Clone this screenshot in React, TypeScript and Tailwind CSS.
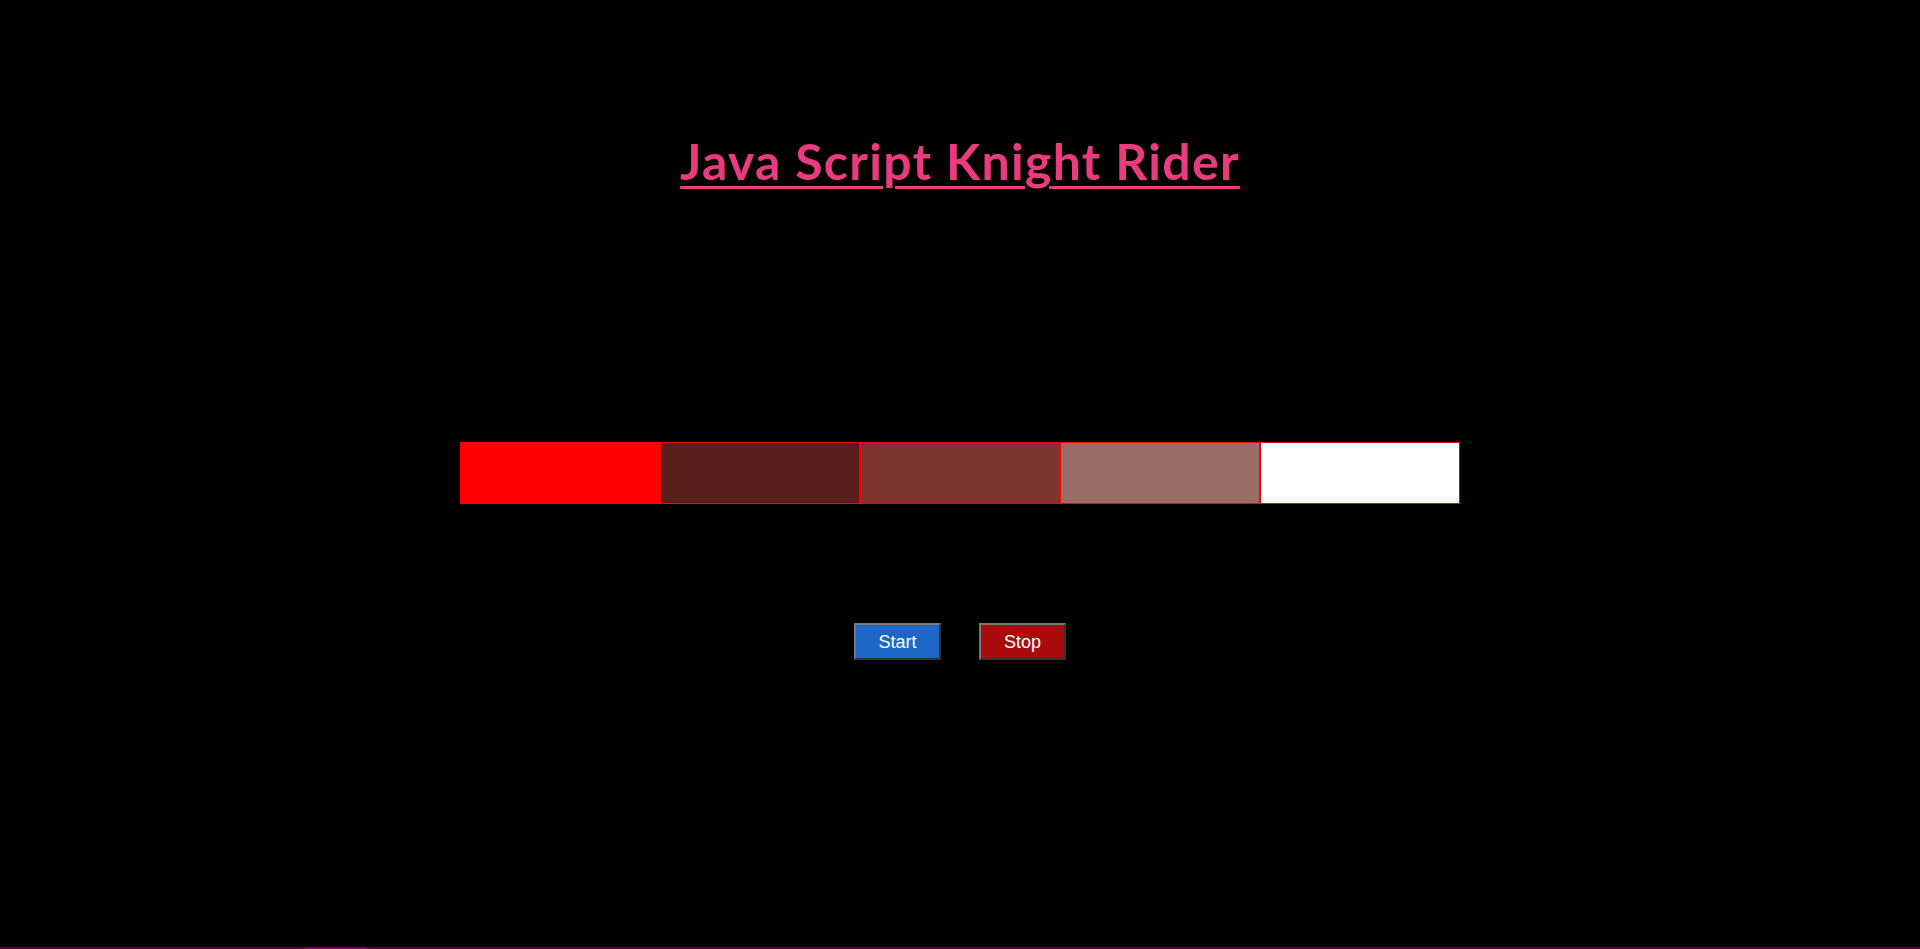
const bars = [
  "bg-[#ff0000]",
  "bg-[#5c1f20]",
  "bg-[#7e3530]",
  "bg-[#9b6d68]",
  "bg-white",
];

export default function App() {
  return (
    <div className="flex h-[949px] w-full flex-col items-center bg-black font-['Liberation_Sans',Arial,sans-serif]">
      <h1 className="mt-[136px] font-['Lato',sans-serif] text-[50px] font-bold leading-none tracking-[1.3px] text-[#e93b7e] underline decoration-[3px] underline-offset-[6px]">
        Java Script Knight Rider
      </h1>

      <div className="mt-[256px] flex w-[1000px]">
        {bars.map((bg, i) => (
          <div key={i} className={`h-[62px] w-[200px] border border-[#ff0000] ${bg}`} />
        ))}
      </div>

      <div className="mt-[119px] flex gap-[38px]">
        <button className="h-[37px] w-[87px] border-2 border-t-[#777] border-l-[#777] border-b-[#333] border-r-[#333] bg-[#1e67c6] pt-px text-[18px] text-white">
          Start
        </button>
        <button className="h-[37px] w-[87px] border-2 border-t-[#777] border-l-[#777] border-b-[#333] border-r-[#333] bg-[#a80c0c] pt-px text-[18px] text-white">
          Stop
        </button>
      </div>

      <div className="flex-1" />
      <div className="flex h-[2px] w-full bg-[#5a0042]">
        <div className="ml-[306px] h-full w-[61px] bg-[#7d0062]" />
      </div>
    </div>
  );
}
